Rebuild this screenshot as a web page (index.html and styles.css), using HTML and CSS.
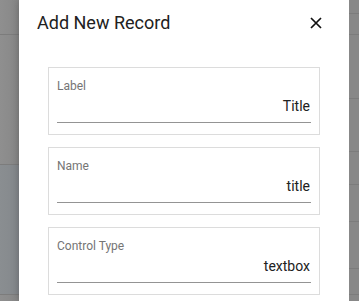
FILE: index.html
```html
<!DOCTYPE html>
<html lang="en">
<head>
    <meta charset="UTF-8">
    <meta name="viewport" content="width=device-width, initial-scale=1.0">
    <title>Add New Record</title>
    <link rel="stylesheet" href="styles.css">
</head>
<body>

<div class="screen">
    <!-- page behind the overlay (left edge) -->
    <div class="backdrop backdrop-left">
        <div class="bg-row" style="height: 35px;"></div>
        <div class="bg-row" style="height: 130px;"></div>
        <div class="bg-row bg-blue" style="height: 130px;"></div>
        <div class="bg-row"></div>
    </div>

    <!-- dialog -->
    <div class="dialog">
        <div class="dialog-header">
            <h2>Add New Record</h2>
            <button class="close-btn" aria-label="close">
                <svg width="12" height="12" viewBox="0 0 12 12">
                    <path d="M1 1 L11 11 M11 1 L1 11" stroke="#111" stroke-width="1.7" fill="none"/>
                </svg>
            </button>
        </div>

        <div class="dialog-body">
            <div class="field">
                <label>Label</label>
                <input type="text" value="Title">
            </div>
            <div class="field">
                <label>Name</label>
                <input type="text" value="title">
            </div>
            <div class="field">
                <label>Control Type</label>
                <input type="text" value="textbox">
            </div>
        </div>
    </div>

    <!-- page behind the overlay (right edge) -->
    <div class="backdrop backdrop-right">
        <div class="bg-row" style="height: 14px;"></div>
        <div class="bg-row" style="height: 21px;"></div>
        <div class="bg-row" style="height: 64px;"></div>
        <div class="bg-row" style="height: 53px;"></div>
        <div class="bg-row" style="height: 33px;"></div>
        <div class="bg-row" style="height: 37px;"></div>
        <div class="bg-row" style="height: 47px;"></div>
        <div class="bg-row" style="height: 26px;"></div>
        <div class="bg-row"></div>
    </div>
</div>

</body>
</html>
```

FILE: styles.css
```css
* {
    margin: 0;
    padding: 0;
    box-sizing: border-box;
}
html, body {
    height: 100%;
    overflow: hidden;
}
body {
    background-color: #8a8a8a;
    font-family: Roboto, "Liberation Sans", Arial, sans-serif;
    color: #212121;
}
.screen {
    display: flex;
    height: 100%;
}
.backdrop {
    display: flex;
    flex-direction: column;
    background-color: #8a8a8a;
}
.backdrop-left {
    width: 19px;
    background: linear-gradient(to right, #8f8f8f, #878787);
}
.backdrop-right {
    width: 10px;
    background-color: #888;
}
.bg-row {
    border-bottom: 1px solid #7c7c7c;
    flex-shrink: 0;
}
.bg-row:last-child {
    flex: 1;
    border-bottom: none;
}
.bg-blue {
    background: linear-gradient(to right, #8a8e91, #84888c);
}
.dialog {
    width: 330px;
    height: 100%;
    background: #fff;
    box-shadow: 0 0 8px rgba(0, 0, 0, 0.25);
}
.dialog-header {
    display: flex;
    justify-content: space-between;
    align-items: flex-start;
    height: 35px;
    padding: 12px 27px 0 18px;
}
.dialog-header h2 {
    font-size: 18px;
    line-height: 22px;
    font-weight: 400;
    color: #212121;
}
.close-btn {
    background: none;
    border: none;
    margin-top: 5px;
    width: 12px;
    height: 12px;
    cursor: pointer;
}
.close-btn svg {
    display: block;
}
.dialog-body {
    display: flex;
    flex-direction: column;
    gap: 12px;
    padding: 32px 29px 0 29px;
}
.field {
    display: flex;
    flex-direction: column;
    border: 1px solid #dcdcdc;
    padding: 11px 8px 11px 8px;
}
.field label {
    font-size: 12px;
    line-height: 14px;
    color: #757575;
    margin-bottom: 5px;
}
.field input {
    font-family: Roboto, "Liberation Sans", Arial, sans-serif;
    font-size: 14px;
    line-height: 16px;
    height: 25px;
    padding: 0 1px 8px 0;
    text-align: right;
    color: #212121;
    border: none;
    border-bottom: 1px solid #949494;
    outline: none;
    background: transparent;
}
```
